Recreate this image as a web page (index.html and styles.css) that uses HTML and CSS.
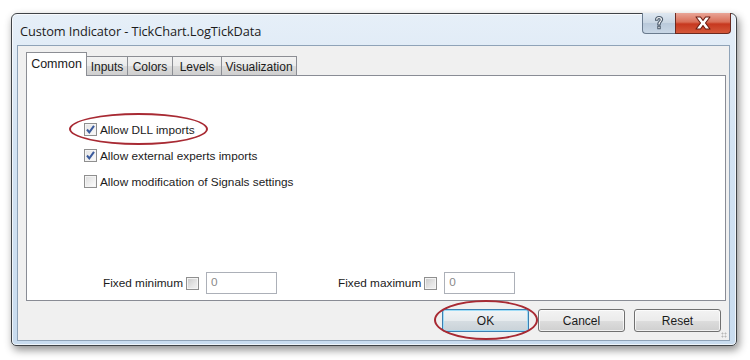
FILE: index.html
```html
<!DOCTYPE html>
<html>
<head>
<meta charset="utf-8">
<link rel="stylesheet" href="styles.css">
</head>
<body>
<div class="window">
  <div class="titlebar">
    <span class="title">Custom Indicator - TickChart.LogTickData</span>
  </div>
  <div class="caption-buttons">
    <div class="cap-help">
      <svg width="14" height="16" viewBox="0 0 14 16"><path d="M3.5 5.2 C3.5 2.6 5 1.5 7 1.5 C9.2 1.5 10.6 2.8 10.6 4.6 C10.6 6.6 8.2 7 8.2 9.2 L8.2 10 L5.8 10 L5.8 9 C5.8 6.4 8.2 6.2 8.2 4.8 C8.2 4 7.7 3.6 7 3.6 C6.2 3.6 5.8 4.2 5.8 5.2 Z M5.8 11.3 L8.2 11.3 L8.2 13.8 L5.8 13.8 Z" fill="#f4f6f8" stroke="#4c5b6b" stroke-width="1.1" stroke-linejoin="round"/></svg>
    </div>
    <div class="cap-close">
      <svg width="20" height="14" viewBox="0 0 20 14"><path d="M3 1 L7.5 1 L10 4.5 L12.5 1 L17 1 L12.5 7 L17 13 L12.5 13 L10 9.5 L7.5 13 L3 13 L7.5 7 Z" fill="#ffffff" stroke="#6b1d12" stroke-width="1.1" stroke-linejoin="round"/></svg>
    </div>
  </div>
  <div class="client">
    <div class="tabs">
      <div class="tab active t-common">Common</div>
      <div class="tab t-inputs">Inputs</div>
      <div class="tab t-colors">Colors</div>
      <div class="tab t-levels">Levels</div>
      <div class="tab t-vis">Visualization</div>
    </div>
    <div class="panel">
      <div class="checks">
        <label class="check-row">
          <span class="box checked"><svg width="11" height="11" viewBox="0 0 11 11"><path d="M2 5.5 L4.3 8.3 L9 1.8" fill="none" stroke="#3a5a9c" stroke-width="2"/></svg></span>
          <span>Allow DLL imports</span>
        </label>
        <label class="check-row">
          <span class="box checked"><svg width="11" height="11" viewBox="0 0 11 11"><path d="M2 5.5 L4.3 8.3 L9 1.8" fill="none" stroke="#3a5a9c" stroke-width="2"/></svg></span>
          <span>Allow external experts imports</span>
        </label>
        <label class="check-row">
          <span class="box"></span>
          <span>Allow modification of Signals settings</span>
        </label>
      </div>
      <div class="fixed-row">
        <div class="fixed min">
          <span>Fixed minimum</span>
          <span class="box small"></span>
          <span class="input">0</span>
        </div>
        <div class="fixed max">
          <span>Fixed maximum</span>
          <span class="box small"></span>
          <span class="input">0</span>
        </div>
      </div>
    </div>
    <div class="buttons">
      <div class="btn default">OK</div>
      <div class="btn">Cancel</div>
      <div class="btn">Reset</div>
    </div>
    <div class="grip"></div>
  </div>
  <div class="ring ring-dll"></div>
  <div class="ring ring-ok"></div>
</div>
</body>
</html>
```
FILE: styles.css
```css
html, body {
  margin: 0;
  padding: 0;
  background: #ffffff;
  width: 750px;
  height: 360px;
  overflow: hidden;
}
body {
  font-family: "Liberation Sans", Arial, sans-serif;
  font-size: 12px;
  color: #1b1b1b;
}
.window {
  position: relative;
  margin: 13px 0 0 11px;
  width: 726px;
  height: 333px;
  box-sizing: border-box;
  border: 1px solid #3f4347;
  border-radius: 6px 6px 5px 5px;
  background: linear-gradient(180deg, #e6eff8 0%, #d3e3f3 40%, #c9dcef 100%);
  box-shadow: 2px 4px 9px rgba(0,0,0,0.45), inset 0 0 0 1px rgba(255,255,255,0.7);
  padding: 0 6px 4px 5px;
  display: flex;
  flex-direction: column;
}
.titlebar {
  height: 31px;
  display: flex;
  align-items: center;
  padding-left: 3px;
}
.title {
  font-family: "Open Sans", "Noto Sans", sans-serif;
  font-size: 12.8px;
  color: #1c1c1c;
  letter-spacing: -0.1px;
  margin-top: 2px;
}
.caption-buttons {
  position: absolute;
  top: -1px;
  right: 5px;
  display: flex;
  height: 22px;
}
.cap-help {
  width: 33px;
  height: 21px;
  box-sizing: border-box;
  border: 1px solid #6a7b8e;
  border-right: none;
  border-top: none;
  border-radius: 0 0 0 4px;
  background: linear-gradient(180deg, #dfe8f1 0%, #c9d6e3 50%, #b9c9da 51%, #c8d7e6 100%);
  display: flex;
  align-items: center;
  justify-content: center;
}
.cap-close {
  width: 56px;
  height: 21px;
  box-sizing: border-box;
  border: 1px solid #6b2a20;
  border-top: none;
  border-radius: 0 0 4px 0;
  background: linear-gradient(180deg, #e9a597 0%, #d96f58 45%, #c7381f 55%, #d4583a 100%);
  display: flex;
  align-items: center;
  justify-content: center;
}
.client {
  position: relative;
  flex: 1;
  background: #f0f0f0;
  border: 1px solid #8fa3b8;
  padding: 6px 3px 0 8px;
  display: flex;
  flex-direction: column;
}
.tabs {
  display: flex;
  align-items: flex-end;
  height: 23px;
  position: relative;
  z-index: 1;
}
.tab {
  height: 19px;
  box-sizing: border-box;
  border: 1px solid #8c8e94;
  border-bottom: none;
  border-left: none;
  background: linear-gradient(180deg, #f2f2f2 0%, #ebebeb 50%, #dcdcdc 51%, #cfcfcf 100%);
  padding-top: 3px;
  text-align: center;
  font-size: 12px;
  line-height: 14px;
}
.tab.active {
  background: #ffffff;
  border-left: 1px solid #8c8e94;
  padding-top: 4px;
  margin-bottom: -1px;
  height: 24px;
  font-size: 12.5px;
}
.t-common { width: 61px; }
.t-inputs { width: 41px; }
.t-colors { width: 45px; }
.t-levels { width: 49px; }
.t-vis { width: 75px; }
.panel {
  height: 226px;
  box-sizing: border-box;
  background: #ffffff;
  border: 1px solid #898c95;
  position: relative;
  display: flex;
  flex-direction: column;
  justify-content: space-between;
  padding: 47px 0 6px 57px;
}
.checks {
  display: flex;
  flex-direction: column;
  gap: 13px;
}
.check-row {
  display: flex;
  align-items: center;
  gap: 3px;
  height: 13px;
  font-size: 11.8px;
}
.box {
  width: 13px;
  height: 13px;
  box-sizing: border-box;
  border: 1px solid #8f8f8f;
  background: linear-gradient(135deg, #dcdcdc 0%, #f4f4f4 70%, #ffffff 100%);
  box-shadow: inset 0 0 0 1px #f4f4f4;
  display: flex;
  align-items: center;
  justify-content: center;
  flex: none;
}
.box.checked {
  background: linear-gradient(135deg, #e4e4e4 0%, #fafafa 100%);
}
.fixed-row {
  display: flex;
  gap: 61px;
  padding-left: 19px;
}
.fixed {
  display: flex;
  align-items: center;
  font-size: 11.8px;
}
.fixed .box {
  margin-left: 3px;
  background: linear-gradient(135deg, #c8c8c8 0%, #e6e6e6 60%, #f2f2f2 100%);
}
.input {
  margin-left: 7px;
  width: 71px;
  height: 22px;
  box-sizing: border-box;
  border: 1px solid #acb0b8;
  background: #ffffff;
  color: #8a8a8a;
  padding: 1px 0 0 4px;
  line-height: 17px;
}
.buttons {
  display: flex;
  justify-content: flex-end;
  gap: 9px;
  padding: 8px 5px 0 0;
}
.btn {
  width: 87px;
  height: 23px;
  box-sizing: border-box;
  border: 1px solid #707070;
  border-radius: 3px;
  background: linear-gradient(180deg, #f3f3f3 0%, #ebebeb 50%, #dddddd 51%, #cfcfcf 100%);
  box-shadow: inset 0 0 0 1px rgba(255,255,255,0.7);
  display: flex;
  align-items: center;
  justify-content: center;
  font-size: 12px;
}
.btn.default {
  border-color: #3c7fb1;
  box-shadow: inset 0 0 0 1px #9fdcf6;
  background: linear-gradient(180deg, #f1f4f6 0%, #e6ebee 50%, #d6dde2 51%, #c9d2d8 100%);
}
.grip {
  position: absolute;
  right: 2px;
  bottom: 2px;
  width: 6px;
  height: 6px;
  background-image: radial-gradient(circle, #b8b8b8 0.8px, transparent 1.2px);
  background-size: 3px 3px;
}
.ring {
  position: absolute;
  border: 2.5px solid #a82a33;
  border-radius: 50%;
  box-sizing: border-box;
  pointer-events: none;
}
.ring-dll {
  left: 57px;
  top: 99px;
  width: 139px;
  height: 32px;
}
.ring-ok {
  left: 422px;
  top: 286px;
  width: 104px;
  height: 40px;
}
```
